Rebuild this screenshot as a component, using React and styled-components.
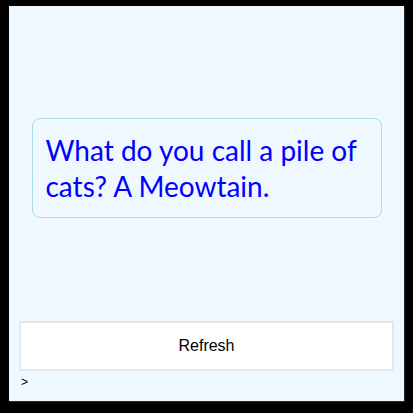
import React from "react";
import styled, { createGlobalStyle } from "styled-components";

const Global = createGlobalStyle`
  html, body { margin: 0; padding: 0; background: #000; }
  body { width: 413px; height: 413px; overflow: hidden; }
`;

const Panel = styled.div`
  box-sizing: border-box;
  margin: 6px 0 0 9px;
  width: 395px;
  height: 395px;
  background: #f0f8ff;
  box-shadow: 1px 1px 0 #2a2a2a;
  display: flex;
  flex-direction: column;
  padding: 10px 10px 0 10px;
`;

const Stage = styled.div`
  flex: 1;
  display: flex;
  align-items: center;
  justify-content: center;
  margin-bottom: 1px;
`;

const JokeCard = styled.div`
  box-sizing: border-box;
  width: 350px;
  height: 100px;
  border: 1px solid #add8e6;
  border-radius: 8px;
  padding: 13px 13px;
  font-family: Lato, "Open Sans", sans-serif;
  font-size: 28px;
  line-height: 36px;
  color: #0000ff;
`;

const RefreshButton = styled.button`
  box-sizing: border-box;
  width: 375px;
  height: 50px;
  flex: none;
  background: #fff;
  border: 2px solid #e6e6e6;
  border-radius: 0;
  font-family: "Liberation Sans", Arial, sans-serif;
  font-size: 16px;
  color: #000;
  cursor: pointer;
  padding: 0;
`;

const Prompt = styled.div`
  font-family: "Liberation Sans", Arial, sans-serif;
  font-size: 12px;
  line-height: 18px;
  color: #000;
  padding: 2px 0 0 2px;
  height: 28px;
  flex: none;
`;

export default function App() {
  return (
    <>
      <Global />
      <Panel>
        <Stage>
          <JokeCard>What do you call a pile of cats? A Meowtain.</JokeCard>
        </Stage>
        <RefreshButton>Refresh</RefreshButton>
        <Prompt>&gt;</Prompt>
      </Panel>
    </>
  );
}
